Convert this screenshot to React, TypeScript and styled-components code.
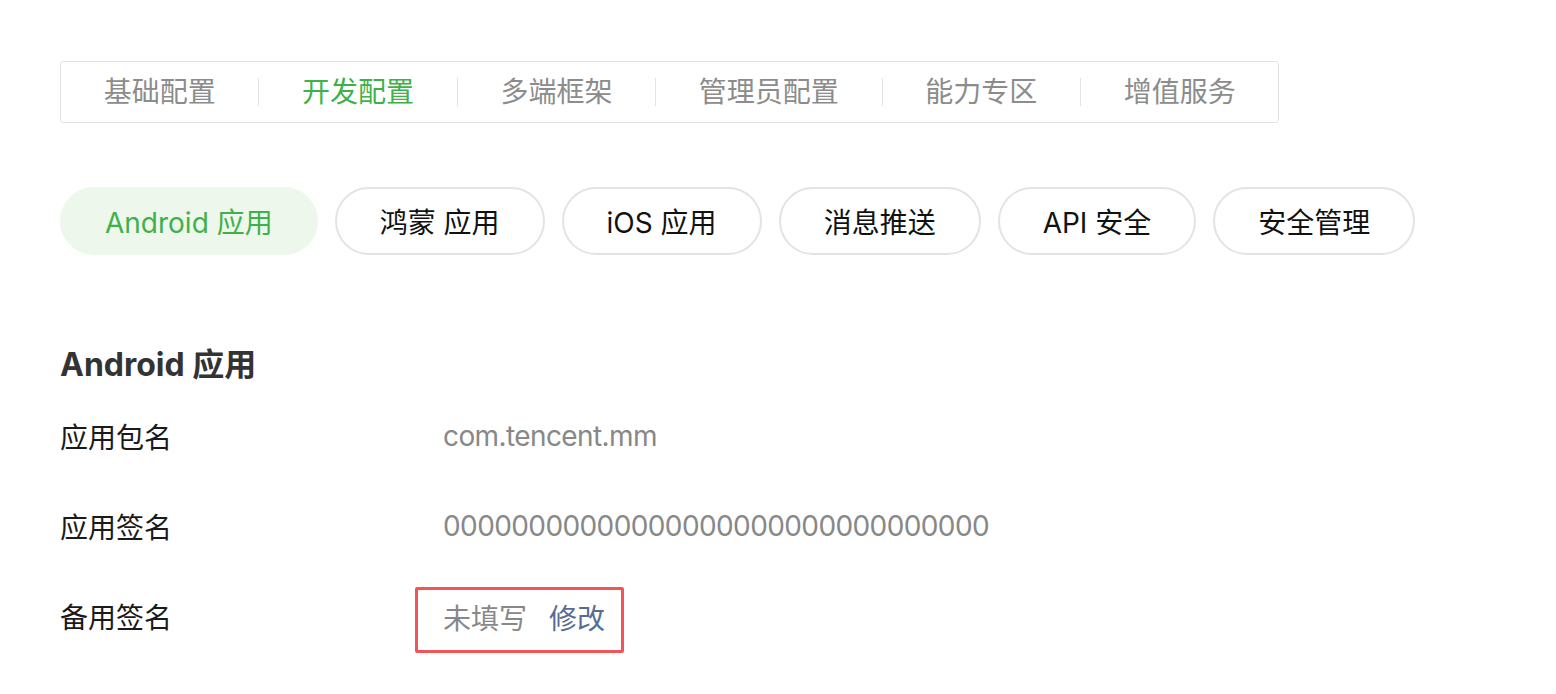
import React from "react";
import styled, { createGlobalStyle, css } from "styled-components";

const GlobalStyle = createGlobalStyle`
  body {
    margin: 0;
    background: #ffffff;
    font-family: Inter, "Noto Sans CJK SC", sans-serif;
  }
`;

const Page = styled.div`
  padding: 61px 0 0 60px;
`;

const TabBar = styled.div`
  display: inline-flex;
  align-items: center;
  height: 60px;
  border: 1px solid #e2e2e2;
  border-radius: 3px;
`;

const Tab = styled.div<{ active?: boolean }>`
  padding: 0 42.7px;
  font-size: 28px;
  line-height: 60px;
  color: ${(props) => (props.active ? "#3fb14a" : "#8c8c8c")};
  cursor: pointer;
`;

const Divider = styled.span`
  width: 1px;
  height: 28px;
  background: #e3e3e3;
`;

const PillRow = styled.div`
  display: flex;
  gap: 17px;
  margin-top: 64px;
`;

const Pill = styled.div<{ active?: boolean }>`
  height: 64px;
  padding: 0 43px;
  display: flex;
  align-items: center;
  border-radius: 34px;
  font-size: 28px;
  border: 2px solid #e3e3e3;
  color: #111111;
  cursor: pointer;
  ${(props) =>
    props.active &&
    css`
      border-color: #eef7ec;
      background: #eef7ec;
      color: #3fb14a;
    `}
`;

const Section = styled.div`
  margin-top: 88px;
`;

const Heading = styled.h2`
  margin: 0 0 4px;
  font-size: 32px;
  line-height: 44px;
  font-weight: 700;
  color: #333333;
`;

const Row = styled.div`
  display: flex;
  align-items: center;
  height: 90px;
  font-size: 28px;
`;

const Label = styled.div`
  width: 383px;
  color: #1a1a1a;
`;

const Value = styled.div`
  color: #888888;
  letter-spacing: -0.6px;
`;

const Highlight = styled.div`
  display: flex;
  align-items: center;
  margin: 8px 0 0 -28px;
  height: 54px;
  padding: 0 16px 6px 25px;
  border: 3px solid #f25555;
  border-radius: 2px;
  color: #888888;
`;

const Link = styled.a`
  margin-left: 22px;
  color: #576b95;
  text-decoration: none;
  cursor: pointer;
`;

const tabs = ["基础配置", "开发配置", "多端框架", "管理员配置", "能力专区", "增值服务"];
const pills = ["Android 应用", "鸿蒙 应用", "iOS 应用", "消息推送", "API 安全", "安全管理"];

export default function App() {
  return (
    <>
      <GlobalStyle />
      <Page>
        <TabBar>
          {tabs.map((t, i) => (
            <React.Fragment key={t}>
              {i > 0 && <Divider />}
              <Tab active={i === 1}>{t}</Tab>
            </React.Fragment>
          ))}
        </TabBar>
        <PillRow>
          {pills.map((p, i) => (
            <Pill key={p} active={i === 0}>
              {p}
            </Pill>
          ))}
        </PillRow>
        <Section>
          <Heading>Android 应用</Heading>
          <Row>
            <Label>应用包名</Label>
            <Value>com.tencent.mm</Value>
          </Row>
          <Row>
            <Label>应用签名</Label>
            <Value>{"0".repeat(32)}</Value>
          </Row>
          <Row>
            <Label>备用签名</Label>
            <Highlight>
              未填写
              <Link>修改</Link>
            </Highlight>
          </Row>
        </Section>
      </Page>
    </>
  );
}
